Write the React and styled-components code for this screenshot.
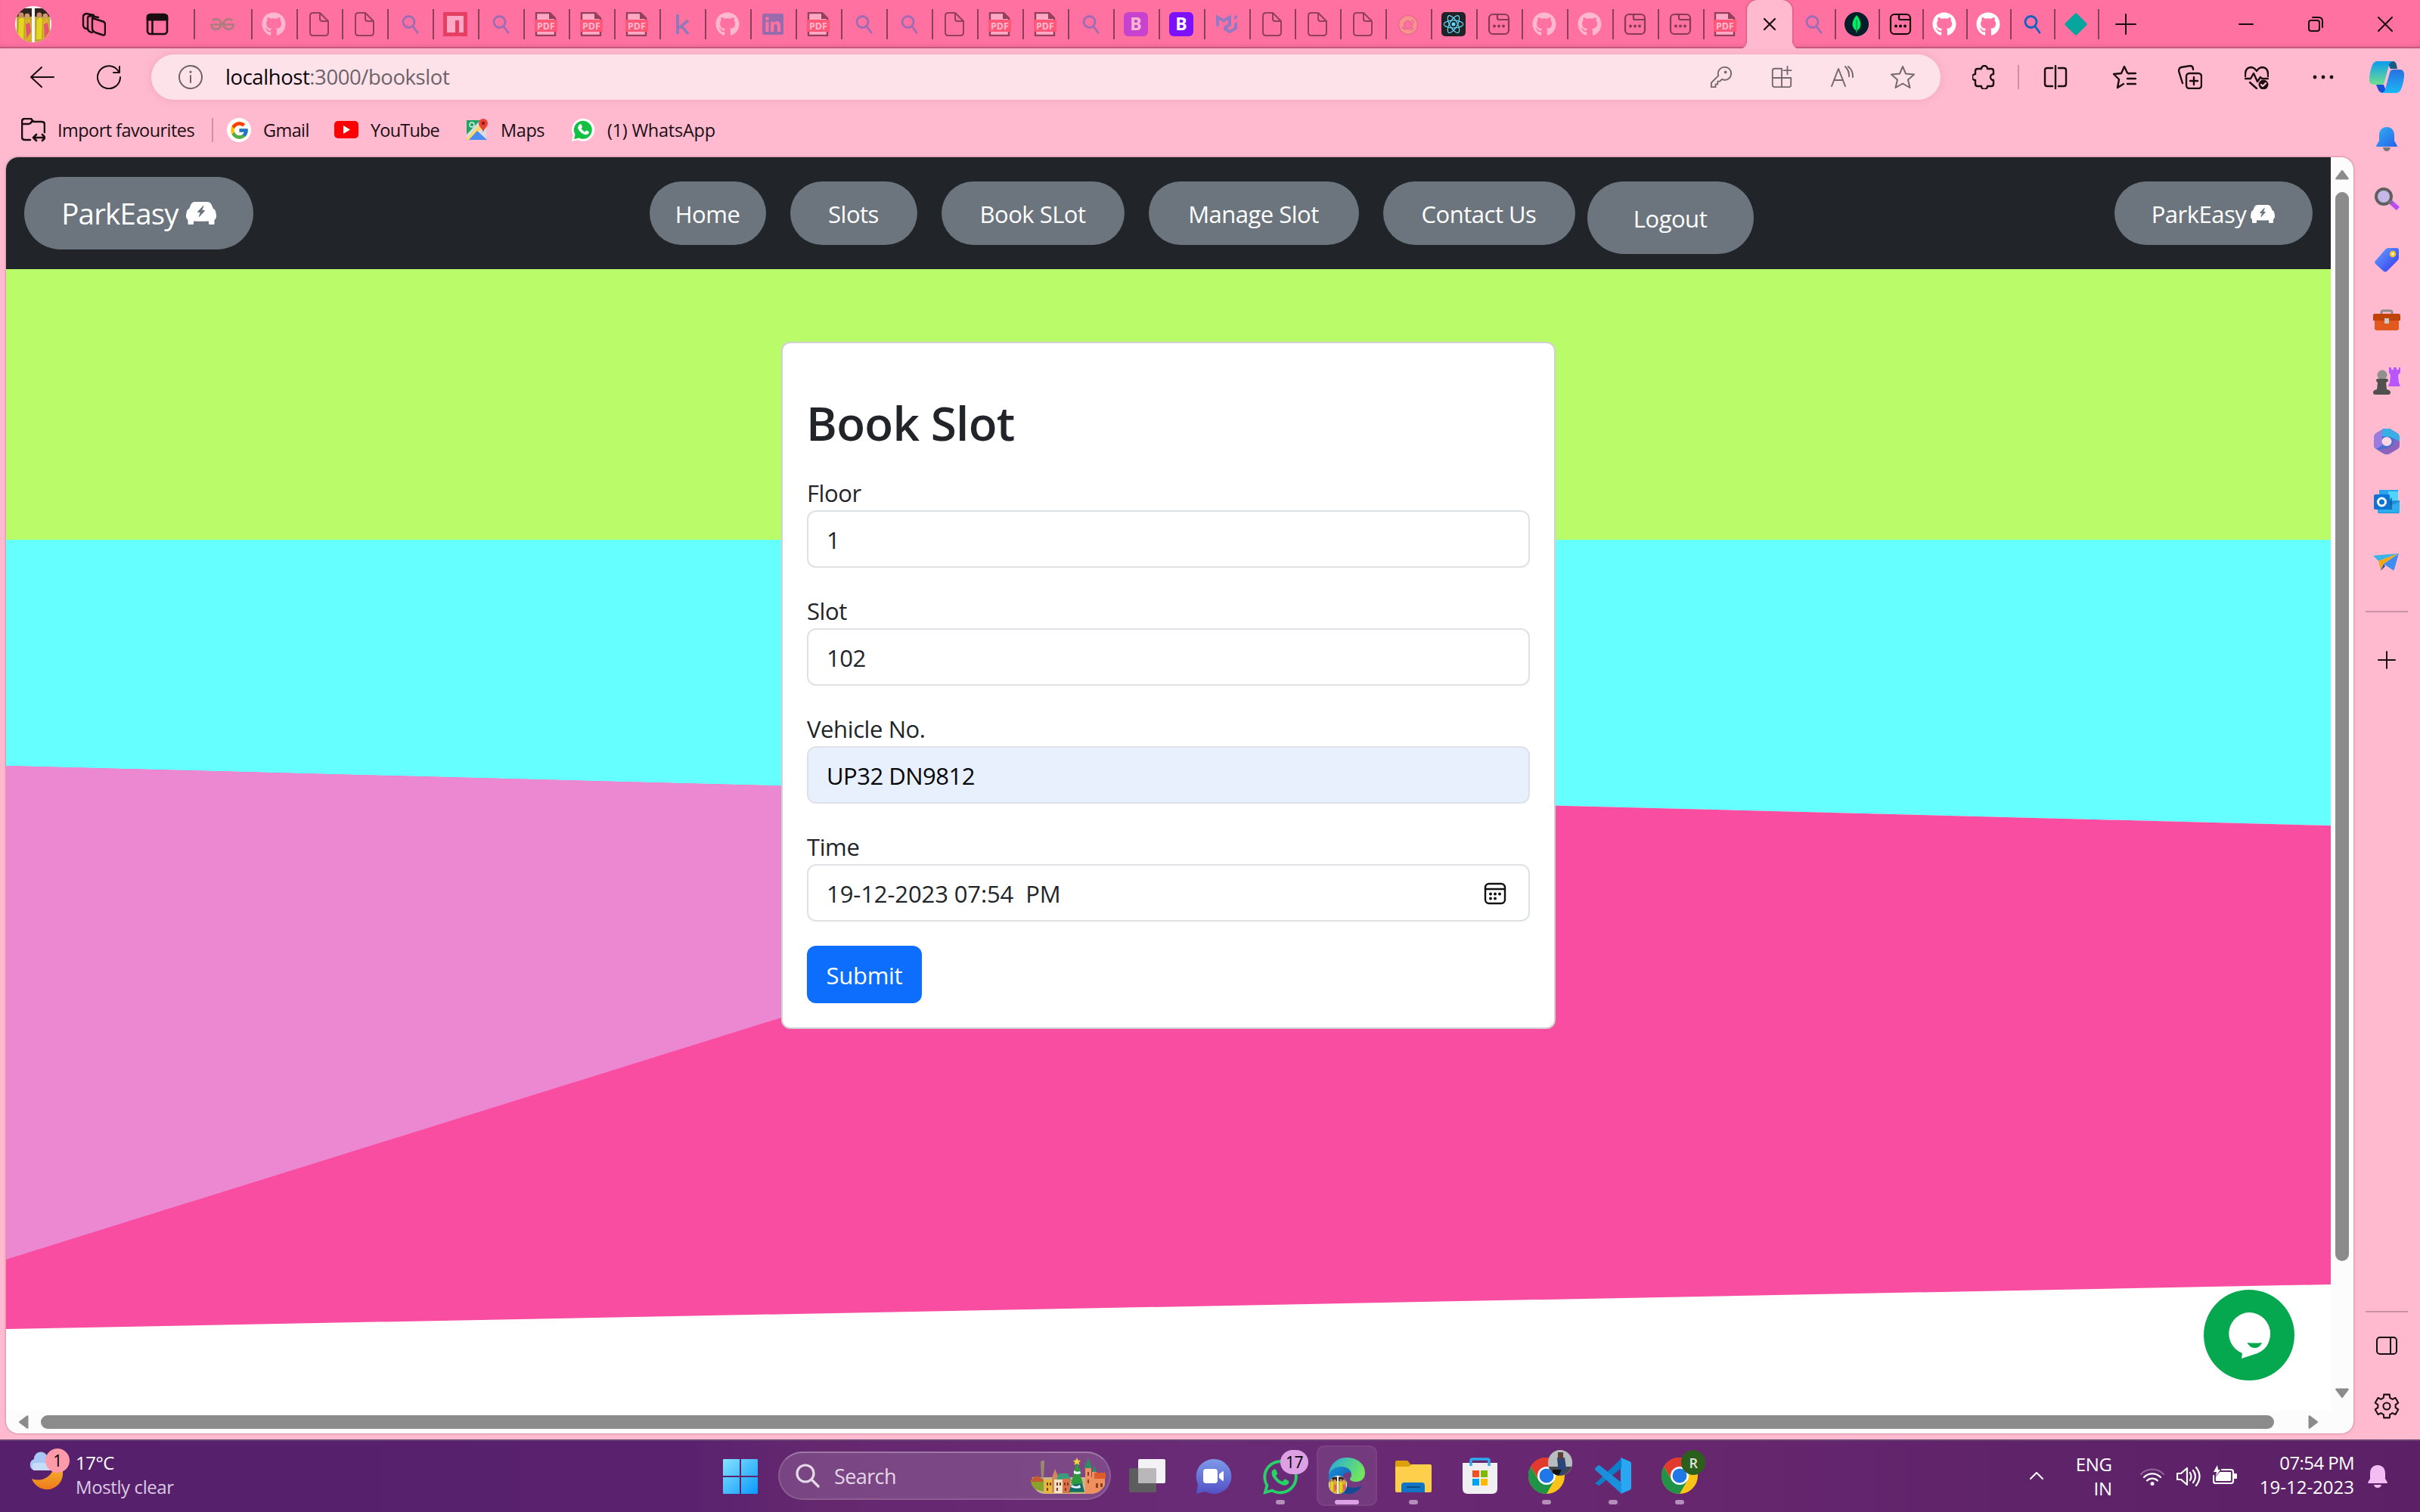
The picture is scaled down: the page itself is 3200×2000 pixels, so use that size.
import React from "react";
import styled, { createGlobalStyle } from "styled-components";
import { FaGithub, FaWhatsapp, FaLinkedin } from "react-icons/fa";
import { BsFillEvFrontFill } from "react-icons/bs";
import { SiGeeksforgeeks, SiMui, SiReact } from "react-icons/si";
import { FcGoogle } from "react-icons/fc";

const Global = createGlobalStyle`
  *, *::before, *::after { box-sizing: border-box; }
  body { margin: 0; overflow: hidden; font-family: "Open Sans", "Noto Sans", sans-serif; }
  svg { display: block; flex: none; }
`;

/* ---------- window frame ---------- */
const Screen = styled.div`
  width: 3200px;
  height: 2000px;
  display: flex;
  flex-direction: column;
  background: #ffbad0;
  overflow: hidden;
`;
const TitleBar = styled.div`
  height: 64px;
  flex: none;
  display: flex;
  align-items: center;
  background: #ff71a0;
  box-shadow: inset 0 -2px 0 #c9587f, inset 0 -6px 5px -3px #e06490;
`;
const Slot = styled.div`
  width: ${(p) => p.$w}px;
  height: ${(p) => p.$h || 60}px;
  flex: none;
  display: flex;
  align-items: center;
  justify-content: center;
`;
const TabSlot = styled.div`
  width: ${(p) => p.$w || 60}px;
  height: 40px;
  flex: none;
  display: flex;
  align-items: center;
  justify-content: center;
  border-left: 2px solid ${(p) => (p.$first ? "transparent" : "#8c3f5a")};
  padding-right: 2px;
  svg { opacity: ${(p) => (p.$awake ? 1 : 0.5)}; }
`;
const ActiveTab = styled.div`
  position: relative;
  width: 60px;
  height: 64px;
  flex: none;
  display: flex;
  align-items: center;
  justify-content: center;
  background: #ffbad0;
  border-radius: 14px 14px 0 0;
  box-shadow: 0 0 3px #a03c62;
  clip-path: inset(0 -10px 0 -10px);
  &::before, &::after {
    content: "";
    position: absolute;
    bottom: 0;
    width: 7px;
    height: 10px;
  }
  &::before { left: -7px; background: radial-gradient(ellipse at 0 0, transparent 68%, #ffbad0 72%); }
  &::after { right: -7px; background: radial-gradient(ellipse at 100% 0, transparent 68%, #ffbad0 72%); }
`;
const WindowControls = styled.div`
  display: flex;
  margin-left: auto;
`;
const Workspace = styled.div`
  height: 1840px;
  flex: none;
  display: flex;
`;
const MainColumn = styled.div`
  width: 3112px;
  display: flex;
  flex-direction: column;
`;

/* ---------- toolbar ---------- */
const Toolbar = styled.div`
  height: 76px;
  flex: none;
  display: flex;
  align-items: center;
  padding-left: 12px;
`;
const AddressBar = styled.div`
  width: 2366px;
  height: 60px;
  flex: none;
  margin: 0 14px 0 12px;
  padding: 0 10px 0 36px;
  display: flex;
  align-items: center;
  border-radius: 30px;
  background: #fee2ea;
  box-shadow: 0 0 12px rgba(160, 60, 100, 0.16);
`;
const Url = styled.span`
  margin: 0 auto 0 30px;
  font-size: 27.5px;
  line-height: 40px;
  letter-spacing: -0.43px;
  color: #6c6268;
  b { font-weight: 400; color: #0a0508; }
`;
const VLine = styled.div`
  width: 2px;
  height: ${(p) => p.$h || 32}px;
  flex: none;
  background: #cb93a5;
`;
const Bookmarks = styled.div`
  height: 68px;
  flex: none;
  display: flex;
  align-items: center;
  padding: 0 0 4px 28px;
`;
const Bookmark = styled.div`
  display: flex;
  align-items: center;
  gap: ${(p) => p.$gap || 16}px;
  width: ${(p) => p.$w}px;
  padding-left: ${(p) => p.$pl || 0}px;
  flex: none;
  font-size: 23.5px;
  line-height: 32px;
  letter-spacing: ${(p) => p.$ls || 0}px;
  color: #1b0e13;
  white-space: nowrap;
`;
const WhiteDisc = styled.span`
  width: 32px;
  height: 32px;
  border-radius: 50%;
  background: #fff;
  display: grid;
  place-items: center;
`;

/* ---------- viewport and scrollbars ---------- */
const Viewport = styled.div`
  width: 3104px;
  height: 1688px;
  margin-left: 8px;
  display: grid;
  grid-template-columns: 3074px 30px;
  grid-template-rows: 1658px 30px;
  border-radius: 16px;
  overflow: hidden;
  background: #fcfcfc;
  box-shadow: 0 0 3px rgba(90, 30, 50, 0.5);
`;
const VScroll = styled.div`
  display: flex;
  flex-direction: column;
  align-items: center;
  padding: 16px 0;
`;
const HScroll = styled.div`
  display: flex;
  align-items: center;
  padding: 0 16px;
`;
const VThumb = styled.div`
  width: 18px;
  height: 1414px;
  margin: 16px 0 auto;
  border-radius: 9px;
  background: #8b8b8b;
`;
const HThumb = styled.div`
  width: 2953px;
  height: 18px;
  margin: 0 auto 0 16px;
  border-radius: 9px;
  background: #8b8b8b;
`;

/* ---------- ParkEasy page ---------- */
const Page = styled.div`
  position: relative;
  z-index: 0;
  display: flex;
  flex-direction: column;
  overflow: hidden;
  background: #fff;
`;
const Backdrop = styled.svg`
  position: absolute;
  inset: 0;
  z-index: -1;
`;
const Nav = styled.nav`
  height: 148px;
  flex: none;
  display: flex;
  align-items: flex-start;
  padding: 32px 24px 0;
  background: #212529;
`;
const Brand = styled.a`
  width: 303px;
  height: 96px;
  margin-top: -6px;
  display: flex;
  align-items: center;
  justify-content: center;
  gap: 10px;
  border-radius: 48px;
  background: #6c757d;
  color: #fff;
  font-size: 38.5px;
  letter-spacing: -0.8px;
`;
const Links = styled.div`
  display: flex;
  align-items: flex-start;
  gap: 32px;
  margin-left: 524px;
`;
const NavButton = styled.a`
  width: ${(p) => p.$w}px;
  height: ${(p) => (p.$tall ? 96 : 84)}px;
  margin-left: ${(p) => (p.$tall ? -16 : 0)}px;
  display: flex;
  align-items: center;
  justify-content: center;
  gap: 6px;
  padding: 2px 1px 0 0;
  border-radius: 48px;
  background: #6c757d;
  color: #fff;
  font-size: 31px;
  letter-spacing: ${(p) => p.$ls ?? -0.5}px;
  white-space: nowrap;
`;
const Account = styled.div`
  margin-left: auto;
`;
const Card = styled.form`
  width: 1024px;
  height: 909px;
  margin: 96px 0 0 1025px;
  padding: 58px 32px 0;
  display: flex;
  flex-direction: column;
  align-items: flex-start;
  border: 2px solid #cfd1d3;
  border-radius: 12px;
  background: #fff;
  color: #212529;
`;
const Title = styled.h2`
  margin: 0 0 33px -1px;
  font-size: 62px;
  line-height: 94px;
  font-weight: 600;
  letter-spacing: -0.7px;
`;
const Field = styled.label`
  width: 956px;
  height: 156px;
  flex: none;
  display: flex;
  flex-direction: column;
  font-size: 31px;
  line-height: 48px;
  letter-spacing: -0.4px;
`;
const LabelText = styled.span`
  height: 48px;
  margin-top: -12px;
  line-height: 50px;
`;
const Control = styled.div`
  height: 76px;
  display: flex;
  align-items: center;
  justify-content: space-between;
  padding: 2px 29px 0 24px;
  border: 2px solid #dee2e6;
  border-radius: 12px;
  background: ${(p) => (p.$filled ? "#e8f0fe" : "#fff")};
  color: ${(p) => (p.$filled ? "#050608" : "#212529")};
  letter-spacing: ${(p) => p.$ls ?? -0.5}px;
  white-space: pre;
`;
const Submit = styled.button`
  width: 152px;
  height: 76px;
  margin-top: -12px;
  padding: 2px 0 0;
  border: 0;
  border-radius: 12px;
  background: #0d6efd;
  color: #fff;
  font: 400 31px/48px "Open Sans", sans-serif;
  letter-spacing: -0.3px;
`;
const ChatBubble = styled.div`
  position: absolute;
  right: 48px;
  bottom: 40px;
  width: 120px;
  height: 120px;
  border-radius: 50%;
  background: #05a84f;
`;

/* ---------- sidebar ---------- */
const Sidebar = styled.div`
  width: 88px;
  display: flex;
  flex-direction: column;
  align-items: center;
`;
const HLine = styled.div`
  width: 56px;
  height: 2px;
  flex: none;
  background: #cb93a5;
  margin-top: ${(p) => p.$mt || 0}px;
`;

/* ---------- taskbar ---------- */
const Taskbar = styled.div`
  height: 96px;
  flex: none;
  display: flex;
  align-items: flex-start;
  border-top: 2px solid #6a4273;
  background: linear-gradient(90deg, #56206d 0, #59216e 28%, #65286f 34%, #6a2b76 50%, #67276f 68%, #5f236a 84%, #5b2065 100%);
`;
const Weather = styled.div`
  width: 935px;
  display: flex;
  gap: 8px;
  padding: 10px 0 0 36px;
`;
const TwoLines = styled.div`
  display: flex;
  flex-direction: column;
  padding-top: ${(p) => p.$pt || 0}px;
  text-align: ${(p) => p.$align || "left"};
  color: #fff;
  font-size: 24px;
  line-height: 32px;
  letter-spacing: -0.3px;
  white-space: nowrap;
`;
const Line = styled.span`
  letter-spacing: ${(p) => p.$ls}px;
  color: ${(p) => (p.$dim ? "#dccbe2" : "#fff")};
`;
const TaskItem = styled.div`
  width: 88px;
  height: 94px;
  flex: none;
  position: relative;
  display: flex;
  justify-content: center;
  align-items: flex-start;
  padding-top: ${(p) => p.$top || 22}px;
  &::before {
    content: "";
    display: ${(p) => (p.$active ? "block" : "none")};
    position: absolute;
    left: 4px;
    top: 6px;
    width: 80px;
    height: 80px;
    border-radius: 10px;
    background: rgba(255, 255, 255, 0.08);
    border: 2px solid rgba(255, 255, 255, 0.05);
  }
  &::after {
    content: "";
    display: ${(p) => (p.$active || p.$open ? "block" : "none")};
    position: absolute;
    left: ${(p) => (p.$active ? 28 : 38)}px;
    top: 78px;
    width: ${(p) => (p.$active ? 32 : 12)}px;
    height: 6px;
    border-radius: 3px;
    background: ${(p) => (p.$active ? "#dda0e4" : "#b48fba")};
  }
  svg { position: relative; }
`;
const Badge = styled.span`
  position: absolute;
  left: ${(p) => p.$x}px;
  top: ${(p) => p.$y}px;
  width: ${(p) => p.$w || 32}px;
  height: ${(p) => p.$h || 32}px;
  border-radius: 18px;
  display: flex;
  align-items: center;
  justify-content: center;
  background: ${(p) => p.$bg};
  color: ${(p) => p.$fg || "#000"};
  font-size: ${(p) => p.$size || 21}px;
  font-weight: ${(p) => p.$weight || 400};
  letter-spacing: -0.5px;
  overflow: hidden;
`;
const WeatherIcon = styled.div`
  position: relative;
  width: 56px;
  height: 60px;
`;
const SearchBox = styled.div`
  width: 440px;
  height: 64px;
  margin: 14px 4px 0 6px;
  flex: none;
  display: flex;
  align-items: center;
  padding: 0 4px 0 21px;
  border: 2px solid rgba(255, 255, 255, 0.13);
  border-top-color: rgba(255, 255, 255, 0.28);
  border-radius: 32px;
  background: rgba(255, 255, 255, 0.14);
  color: #e6d6ea;
  font-size: 27px;
  letter-spacing: -0.6px;
  span { margin: 1px auto 0 19px; }
`;
const Tray = styled.div`
  margin-left: auto;
  height: 94px;
  padding: 8px 32px 0 0;
  display: flex;
  align-items: flex-start;
`;
const TrayIcon = styled.div`
  width: 48px;
  height: ${(p) => p.$h || 78}px;
  display: grid;
  place-items: center;
`;

/* ---------- drawings ---------- */
const Ico = ({ s = 32, h, vb = "0 0 32 32", w = 2, c = "#1a0d12", children }) => (
  <svg width={s} height={h || s} viewBox={vb} fill="none" stroke={c} strokeWidth={w} strokeLinecap="round" strokeLinejoin="round">
    {children}
  </svg>
);
const FileIcon = () => (
  <Ico c="#2a1018">
    <path d="M8 1h9l11 11v15q0 4-4 4H8q-4 0-4-4V5q0-4 4-4zM17 1v8q0 3 3 3h8" />
  </Ico>
);
const LensIcon = ({ c = "#3d69c8" }) => (
  <Ico s={32} w={2.8} c={c}>
    <circle cx="14.5" cy="13" r="7.5" />
    <path d="M20 19l6 8" />
  </Ico>
);
const PdfIcon = () => (
  <svg width="32" height="32" viewBox="0 0 32 32">
    <path d="M3 1h18l7 7v23H3z" fill="#ffe0ea" stroke="#2a1018" strokeWidth="2.4" />
    <path d="M20 1v8h8z" fill="#2a1018" />
    <path d="M1 10h30v16H1z" fill="#ff3f52" />
    <text x="16" y="23" textAnchor="middle" fontFamily="Open Sans" fontWeight="700" fontSize="12.5" fill="#fff">PDF</text>
  </svg>
);
const NpmIcon = () => (
  <svg width="32" height="32" viewBox="0 0 32 32">
    <path d="M0 0h32v32H0z" fill="#cc1027" />
    <path d="M5 5h22v22h-6V11h-5v16H5z" fill="#ffe0ea" />
  </svg>
);
const KaggleIcon = () => (
  <svg width="32" height="32" viewBox="0 0 32 32" fill="none" stroke="#2f80cf" strokeWidth="4">
    <path d="M10 3v26M24 11L12 21M15 18l9 11" />
  </svg>
);
const BootIcon = ({ faded }) => (
  <svg width="32" height="32" viewBox="0 0 32 32" overflow="visible">
    <rect width="32" height="32" rx="6" fill={faded ? "#9016ff" : "#7c10fb"} />
    <text x="16" y="24" textAnchor="middle" fontFamily="Open Sans" fontWeight="700" fontSize="23" fill="#fff">B</text>
  </svg>
);
const WindowIcon = () => (
  <Ico c="#12060a" w={2.2}>
    <rect x="3" y="3" width="26" height="26" rx="5" />
    <path d="M14 3v5q0 2 2 2h13" />
    <g fill="#12060a" stroke="none"><circle cx="10" cy="18.5" r="2" /><circle cx="16" cy="18.5" r="2" /><circle cx="22" cy="18.5" r="2" /></g>
  </Ico>
);
const DonutIcon = () => (
  <Ico c="#f5b87a" w={6}>
    <circle cx="16" cy="17" r="9.5" />
    <g stroke="#d9668a" strokeWidth="1.600"><circle cx="16" cy="17" r="12.500" /><circle cx="16" cy="17" r="5" /><path d="M8 20l4 3M20 24l3-3M21 10l3 4" /></g>
  </Ico>
);
const ReactTile = () => (
  <svg width="32" height="32" viewBox="0 0 32 32">
    <rect width="32" height="32" rx="5" fill="#202225" />
    <g transform="translate(2.5 2.5)"><SiReact size={27} color="#61dafb" /></g>
  </svg>
);
const MongoIcon = () => (
  <svg width="32" height="32" viewBox="0 0 32 32">
    <circle cx="16" cy="16" r="16" fill="#021e2b" />
    <path d="M16 4c5 6 7 12 4 17-1 2-3 3-4 4-1-1-3-2-4-4-3-5-1-11 4-17z" fill="#00ed64" />
    <path d="M16 10v17" stroke="#0a9f50" strokeWidth="1.6" />
  </svg>
);
const Diamond = () => (
  <svg width="32" height="32" viewBox="0 0 32 32">
    <path d="M16 1.500q1 0 2 1l12 12q1.500 1.500 0 3l-12 12q-2 2-4 0l-12-12q-1.500-1.500 0-3l12-12q1-1 2-1z" fill="#06a69e" />
  </svg>
);
const Figures = ({ s = 48 }) => (
  <svg width={s} height={s} viewBox="0 0 48 48">
    <defs><clipPath id={`disc${s}`}><circle cx="24" cy="24" r="24" /></clipPath></defs>
    <g clipPath={`url(#disc${s})`}>
      <path d="M0 0h48v48H0z" fill="#f8f4f1" />
      {[2, 26].map((x) => (
        <g key={x} transform={`translate(${x} 0)`}>
          <path d="M0 3h20v30H0z" fill="#30221e" />
          <path d="M0 14h20v34H0z" fill="#b9a92e" />
          <path d="M3 18q3-5 7-1l-1 27H2z" fill="#e6d420" />
          <path d="M11 18q4-5 7 0l2 28h-9z" fill="#dcae2c" />
          <path d="M12 24l5-2 2 12-6 9z" fill="#e5556f" />
          <circle cx="6" cy="12" r="3.500" fill="#c98d69" />
          <circle cx="14" cy="13" r="3.300" fill="#d39a72" />
        </g>
      ))}
    </g>
  </svg>
);
const MapsIcon = () => (
  <svg width="32" height="32" viewBox="0 0 32 32">
    <path d="M1 3h26v26H1z" fill="#d9dde2" />
    <path d="M1 3h18L1 22z" fill="#1fa463" />
    <path d="M1 27L20 7l4 4L5 29H1z" fill="#fdd663" />
    <path d="M15 17l13 12H4z" fill="#4a8bf5" />
    <circle cx="8" cy="9" r="3" fill="none" stroke="#d7f0e2" strokeWidth="1.500" />
    <path d="M23 19c-1-5-6-7-6-12a6 6 0 0 1 12 0c0 5-5 7-6 12z" fill="#ea4335" />
    <circle cx="23" cy="7" r="2.200" fill="#8a1d16" />
  </svg>
);
const WaIcon = () => (
  <svg width="32" height="32" viewBox="0 0 32 32">
    <path d="M1 31l2-8a15 15 0 1 1 6 6z" fill="#fff" />
    <path d="M4 28l1.500-6a12 12 0 1 1 5 4.600z" fill="#12c143" />
    <path d="M11 9q2-2 3 .5l1 2.500-1.500 2q2 3 5 4.500l2-2 3 1.500q1 1-.5 3-2.500 2-6 .5-5-2-7.500-7-1-3 1.500-5.500z" fill="#fff" />
  </svg>
);

const PetalGrad = ({ id, a, b, x2 = 1, y2 = 1 }) => (
  <linearGradient id={id} x1="0" y1="0" x2={x2} y2={y2}><stop offset="0" stopColor={a} /><stop offset="1" stopColor={b} /></linearGradient>
);
const Copilot = () => (
  <svg width="48" height="48" viewBox="0 0 48 48">
    <defs>
      <PetalGrad id="cp1" a="#0a9bf0" b="#6fe08e" x2={0} />
      <PetalGrad id="cp2" a="#2a6fe0" b="#19b8f5" x2={0} />
    </defs>
    <path d="M24 1h8q4 0 5 5l1 5h-9z" fill="#175a86" />
    <path d="M10 32h10l4 11h-4q-6 0-8-6z" fill="#1a4fd8" />
    <path d="M12 1h20q-4 1-5 5l-6 22q-1 4-5 4H7q-7 0-6-9 1-10 4-17 2-5 7-5z" fill="url(#cp1)" />
    <path d="M36 43H17q4-1 5-5l6-22q1-4 5-4h8q7 0 6 9-1 10-4 17-2 5-7 5z" fill="url(#cp2)" />
  </svg>
);
const BlueBell = () => (
  <svg width="32" height="34" viewBox="0 0 32 34">
    <defs><PetalGrad id="bell" a="#33b1f2" b="#2463e8" /></defs>
    <path d="M11 28h10q-1 5-5 5t-5-5z" fill="#777" />
    <path d="M16 1c7 0 10 5 10 11v7l4 7q0 1-1 1H3q-1 0-1-1l4-7v-7C6 6 9 1 16 1z" fill="url(#bell)" />
  </svg>
);
const SideSearch = () => (
  <svg width="34" height="34" viewBox="0 0 34 34">
    <path d="M22 20l10 9" stroke="#b94cf5" strokeWidth="6" />
    <circle cx="13" cy="13" r="10" fill="#c5b7e6" stroke="#606060" strokeWidth="4" />
    <path d="M20 19l4 3" stroke="#777" strokeWidth="3" />
  </svg>
);
const Tag = () => (
  <svg width="34" height="34" viewBox="0 0 34 34">
    <defs><PetalGrad id="tag" a="#63a6ff" b="#3434ef" /></defs>
    <path d="M19 1h11q3 0 3 3v10q0 2-2 4L18 31q-3 3-6 0L2 22q-2-3 1-5L15 3q2-2 4-2z" fill="url(#tag)" />
    <circle cx="25" cy="9" r="3" fill="#e9f0ff" stroke="#fbc719" strokeWidth="2.400" />
  </svg>
);
const Toolbox = () => (
  <svg width="36" height="30" viewBox="0 0 36 30">
    <path d="M11 8V4q0-2 2-2h10q2 0 2 2v4" fill="none" stroke="#8b8b8b" strokeWidth="3" />
    <path d="M2 14h32v11q0 3-3 3H5q-3 0-3-3z" fill="#e1591f" />
    <path d="M0 8q0-2 2-2h32q2 0 2 2v7H0z" fill="#bf4309" />
    <path d="M15 12h6v7h-6z" fill="#c9c9c9" />
  </svg>
);
const Chess = () => (
  <svg width="36" height="36" viewBox="0 0 36 36">
    <path d="M21 0h3v3h3V0h4v3h3V0h2v7q-3 2-3 4l1 9 2 5H20l2-5 1-9q0-2-2-4z" fill="#b755ff" />
    <circle cx="12" cy="10" r="6.500" fill="#909090" />
    <path d="M4 17q0-2 2-2h12q2 0 2 2t-3 3l1 9q5 1 5 4 0 3-3 3H3q-3 0-3-3t5-4l1-9q-2-1-2-3z" fill="#505050" />
  </svg>
);
const M365 = () => (
  <svg width="34" height="36" viewBox="0 0 34 36">
    <path d="M13 1h8l10 6q3 2 3 5v11q0 3-3 5l-10 6q-4 2-8 0L3 28q-3-2-3-5V12q0-3 3-5z" fill="#4b6fd0" />
    <path d="M13 1q-2 1-2 5v17l-8 5q-3-2-3-5V12q0-3 3-5z" fill="#9a7be0" />
    <path d="M12 1h9l10 6q3 2 3 5v6l-12-6-11-1V6q0-4 1-5z" fill="#38aee6" />
    <path d="M34 18v5q0 3-3 5l-10 6q-4 2-8 0l-8-5 13-2 8-5q2-4 0-7z" fill="#8d64bd" />
    <ellipse cx="17" cy="18" rx="6.500" ry="6" fill="#ffd6e4" />
  </svg>
);
const Outlook = () => (
  <svg width="34" height="32" viewBox="0 0 34 32">
    <path d="M7 0h25v20H7z" fill="#2aa4ea" />
    <path d="M19 2h13v12H19z" fill="#4fd5fb" />
    <path d="M5 16l29-2v15q0 2-2 2H7q-2 0-2-2z" fill="#1c8fdd" />
    <path d="M34 16v14H8q-3 0-3-3z" fill="#31b5f2" opacity=".8" />
    <path d="M24 10v16H5v-3z" fill="#0a4d8a" opacity=".6" />
    <rect y="6" width="21" height="20" rx="2" fill="#0b74d4" />
    <ellipse cx="10.500" cy="16" rx="5" ry="5" fill="none" stroke="#fff" strokeWidth="3" />
  </svg>
);
const Plane = () => (
  <svg width="36" height="26" viewBox="0 0 36 26">
    <path d="M0 4L34 1 7 11z" fill="#38b4ea" />
    <path d="M34 1L7 11l3 12 4-8z" fill="#f3a712" />
    <path d="M34 1L14 15l12 8q1 1 2-1z" fill="#3d8df2" />
    <path d="M14 15l-4 9 6-6z" fill="#1551a8" />
  </svg>
);
const Gear = () => {
  const pts = [];
  for (let i = 0; i < 6; i++) {
    [[-0.36, 12.5], [-0.24, 16.8], [0.24, 16.8], [0.36, 12.5]].forEach(([o, r]) => {
      const a = (i * Math.PI) / 3 + o - Math.PI / 2;
      pts.push(`${(18 + r * Math.cos(a)).toFixed(2)},${(18 + r * Math.sin(a)).toFixed(2)}`);
    });
  }
  return (
    <Ico s={34} vb="0 0 36 36" w={2.2}>
      <polygon points={pts.join(" ")} />
      <circle cx="18" cy="18" r="4.800" />
    </Ico>
  );
};
const WinLogo = () => (
  <svg width="46" height="46" viewBox="0 0 46 46">
    <defs>
      <linearGradient id="win" gradientUnits="userSpaceOnUse" x1="0" y1="0" x2="46" y2="46"><stop stopColor="#86e2fd" /><stop offset="1" stopColor="#0a99fb" /></linearGradient>
    </defs>
    <path d="M1 0h21v22H0V1q0-1 1-1zM24 0h21q1 0 1 1v21H24zM0 24h22v22H1q-1 0-1-1zM24 24h22v21q0 1-1 1H24z" fill="url(#win)" />
  </svg>
);
const City = () => (
  <svg width="100" height="48" viewBox="0 0 100 48">
    <path d="M2 26h96v10q-6 12-20 12H20Q6 48 2 34z" fill="#c9b58e" />
    <path d="M14 4h4v3l-1 20h-3L13 7z" fill="#9b8a70" />
    <path d="M0 30l8-6 9 6v15L6 42Q0 37 0 30z" fill="#8aa12b" />
    <path d="M0 29l8-5 9 5-1 3H1z" fill="#c85a31" />
    <path d="M18 29h12v18H18z" fill="#e9b838" />
    <path d="M28 27l4-12 5 12v19h-9z" fill="#d08a5a" />
    <path d="M34 30l3-9h12l5 10z" fill="#3c9b7c" />
    <path d="M31 29h11v18H31z" fill="#f3e2c4" />
    <path d="M42 28h10v19H42z" fill="#e07048" />
    <path d="M21 33h2v4h-2zM25 33h2v4h-2zM34 33h2v4h-2zM38 33h2v4h-2zM44 33h2v4h-2zM48 33h2v4h-2zM21 40h2v4h-2zM34 40h2v4h-2zM45 40h2v4h-2z" fill="#7c3a26" />
    <path d="M72 14h8v34h-8zM81 19h6v18h-6zM80 27h18v9q-6 11-18 12z" fill="#f0905f" />
    <path d="M71 14l3-9 2-4 2 4 3 9zM81 19l3-9 3 9z" fill="#2e8e63" />
    <path d="M84 20h15v8H84z" fill="#dc5c2c" />
    <path d="M75 19h2v5h-2zM75 29h2v5h-2zM86 34h3v6h-3zM92 34h3v5h-3z" fill="#8a3f22" />
    <path d="M61 6l6 15-2 1 4 12-3 1 5 11H50l6-11-3-1 4-12-1-1z" fill="#2f9a3d" />
    <path d="M53 36l15-2 3 11H51z" fill="#136b6a" />
    <path d="M57 17q4 3 8 1l1 3q-5 2-9 0zM54 36q6 4 11 0l1 4q-7 2-13-1z" fill="#e6f3f5" />
    <path d="M61 0l1.500 3.500 3.500.5-2.500 2.500 1 3.500-3.500-2-3.500 2 1-3.500L56 4l3.500-.5z" fill="#f6cf3d" />
  </svg>
);
const TaskView = () => (
  <svg width="48" height="46" viewBox="0 0 48 46">
    <rect x="12" width="36" height="32" rx="2" fill="#f3f2f4" />
    <rect y="12" width="36" height="32" rx="2" fill="#5d5d60" />
    <path d="M12 12h24v20H12z" fill="#b9b7ba" />
  </svg>
);
const MeetIcon = () => (
  <svg width="48" height="48" viewBox="0 0 48 48">
    <defs><PetalGrad id="meet" a="#7d9ae8" b="#5350c5" x2={0} /></defs>
    <path d="M23 1a23 23 0 1 1-10 43L1 47l2-13A23 23 0 0 1 23 1z" fill="url(#meet)" />
    <rect x="10" y="14" width="19" height="19" rx="4" fill="#fff" />
    <path d="M31 21l5-4q1 0 1 1v11q0 1-1 1l-5-4z" fill="#fff" />
  </svg>
);
const EdgeIcon = () => (
  <svg width="48" height="48" viewBox="0 0 48 48">
    <defs>
      <PetalGrad id="edgeTop" a="#23a7e4" b="#6fe65e" y2={0.4} />
      <PetalGrad id="edgeLow" a="#1a8fdc" b="#0c4f9c" />
    </defs>
    <path d="M0 23C1 9 11 0 24 0c14 0 24 9 24 20 0 8-5 12-12 12-5 0-8-2-8-4 0-1 2-2 2-5 0-5-5-9-13-9C8 14 2 18 0 23z" fill="url(#edgeTop)" />
    <path d="M0 24c1-7 8-12 16-12 7 0 13 3 14 9-3-3-12-2-12 8 0 9 9 14 16 18-3 1-6 1-10 1C9 48 0 37 0 24z" fill="url(#edgeLow)" />
    <path d="M19 25c-2 8 4 15 13 15 5 0 8-1 12-3-3 6-10 11-19 11-9-3-13-15-6-23z" fill="#134a94" />
  </svg>
);
const FolderIcon = () => (
  <svg width="48" height="44" viewBox="0 0 48 44">
    <path d="M0 2q0-2 2-2h13q2 0 3 2l2 3v9H0z" fill="#dda008" />
    <path d="M0 8h18l3-3h25q2 0 2 2v33q0 2-2 2H2q-2 0-2-2z" fill="#fdcf4a" />
    <path d="M8 42V33q0-4 4-4h23q4 0 4 4v9z" fill="#1274c4" />
    <path d="M15 35h18" stroke="#0a4a85" strokeWidth="2" />
  </svg>
);
const StoreIcon = () => (
  <svg width="46" height="48" viewBox="0 0 46 48">
    <path d="M0 7h46v34q0 7-7 7H7q-7 0-7-7z" fill="#f0f0f2" />
    <path d="M11 11V4q0-2 2-2h20q2 0 2 2v7" fill="none" stroke="#2da9ee" strokeWidth="3.500" />
    <path d="M13 17h9v9h-9z" fill="#f25022" /><path d="M24 17h9v9h-9z" fill="#7fba00" />
    <path d="M13 28h9v9h-9z" fill="#00a4ef" /><path d="M24 28h9v9h-9z" fill="#ffb900" />
  </svg>
);
const ChromeIcon = () => (
  <svg width="48" height="48" viewBox="0 0 48 48">
    <circle cx="24" cy="24" r="24" fill="#fcc419" />
    <path d="M24 24L3.200 12A24 24 0 0 1 44.800 12z" fill="#e23b2e" />
    <path d="M24 12h20.800A24 24 0 0 0 3.200 12L14 30z" fill="#e23b2e" />
    <path d="M3.200 12A24 24 0 0 0 24 48l10.400-18L24 36l-10.400-6z" fill="#1f9447" />
    <circle cx="24" cy="24" r="12" fill="#fff" />
    <circle cx="24" cy="24" r="9.500" fill="#1f77e8" />
  </svg>
);
const CodeIcon = () => (
  <svg width="48" height="48" viewBox="0 0 48 48">
    <path d="M34 0l12 5q2 1 2 3v32q0 2-2 3l-12 5V0z" fill="#2aa7f2" />
    <path d="M35 1L5 30l-5 4 5 3q1 0 2-1l28-22z" fill="#0d7fc9" />
    <path d="M0 14l5-4q1 0 2 1l28 22v14L33 46 0 16z" fill="#1a8fdb" />
  </svg>
);
const Person = () => (
  <svg width="32" height="34" viewBox="0 0 32 34">
    <defs><clipPath id="person"><ellipse cx="16" cy="17" rx="16" ry="17" /></clipPath></defs>
    <g clipPath="url(#person)">
      <path d="M0 0h32v34H0z" fill="#b8bcc0" />
      <path d="M0 22h32v12H0z" fill="#45464b" />
      <path d="M12 10h10l2 14-4 8h-6z" fill="#2b4577" />
      <path d="M13 3h7v9h-7z" fill="#5b3f37" />
      <path d="M6 26h12l-4 8H6z" fill="#111" />
    </g>
  </svg>
);
const Arrow = ({ d }) => {
  const v = d === "up" || d === "down";
  const paths = { up: "M8 1.500q1-1 2 0l7.500 10q.8 2-1 2H1.500q-2 0-1-2z", down: "M8 12.500q1 1 2 0l7.500-10q.8-2-1-2H1.500q-2 0-1 2z", left: "M1.500 8q-1 1 0 2l10 7.500q2 .8 2-1V1.500q0-2-2-1z", right: "M12.500 8q1 1 0 2l-10 7.500q-2 .8-2-1V1.500q0-2 2-1z" };
  return <svg width={v ? 18 : 14} height={v ? 14 : 18} viewBox={v ? "0 0 18 14" : "0 0 14 18"}><path d={paths[d]} fill="#8b8b8b" /></svg>;
};

const ICONS = {
  gfg: () => <SiGeeksforgeeks size={32} color="#5a8b5e" />,
  gh: () => <FaGithub size={32} color="#fff" />,
  file: FileIcon, lens: LensIcon, npm: NpmIcon, pdf: PdfIcon,
  kaggle: KaggleIcon,
  linkedin: () => <FaLinkedin size={32} color="#3367b8" />,
  boot: () => <BootIcon faded />, mui: () => <SiMui size={28} color="#2f7fe8" />,
  win: WindowIcon, donut: DonutIcon,
  bootOn: BootIcon, react: ReactTile, mongo: MongoIcon, diamond: Diamond,
  lensOn: () => <LensIcon c="#0b63c4" />,
};
const SLEEPING = "gh file file lens npm lens pdf pdf pdf kaggle gh linkedin pdf lens lens file pdf pdf lens boot bootOn! mui file file file donut react! win gh gh win win".split(" ");
const RECENT = ["mongo", "win", "gh", "gh", "lensOn", "diamond"];

const TabItem = ({ name, ...rest }) => {
  const awake = name.endsWith("!") || rest.$awake;
  const Icon = ICONS[name.replace("!", "")];
  return <TabSlot {...rest} $awake={awake}><Icon /></TabSlot>;
};

export default function App() {
  return (
    <Screen>
      <Global />
      <TitleBar>
        <Slot $w={88}><Figures /></Slot>
        <Slot $w={72}>
          <Ico w={2.4}>
            <path d="M14 8l13 4q4 1 4 4v11q0 5-4 3l-9-3q-4-2-4-5zM8 23V8q0-3 4-3l10 2M2 18V6q0-3 4-4l10 2M14 27q-6-1-6-6M6 22q-4-1-4-5" />
          </Ico>
        </Slot>
        <Slot $w={96}>
          <Ico w={2.6}><rect x="3" y="3" width="26" height="26" rx="4" /><path d="M3 10h26M9.500 10v19" /><path d="M5 4h22q2 0 2 2v4H3V6q0-2 2-2z" fill="#1a0d12" /></Ico>
        </Slot>
        <TabItem name="gfg" $w={76} />
        {SLEEPING.map((n, i) => <TabItem key={i} name={n} />)}
        <TabItem name="pdf" $w={58} />
        <ActiveTab><Ico s={20} vb="0 0 20 20" w={2.200}><path d="M3 3l14 14M17 3L3 17" /></Ico></ActiveTab>
        <TabItem name="lens" $w={56} $first />
        {RECENT.map((n, i) => <TabItem key={i} name={n} $w={58} $awake />)}
        <TabSlot $w={74} $awake><Ico s={28} vb="0 0 28 28"><path d="M14 1v26M1 14h26" /></Ico></TabSlot>
        <WindowControls>
          <Slot $w={92}><Ico s={20} vb="0 0 20 20"><path d="M1 10h18" /></Ico></Slot>
          <Slot $w={92}><Ico s={20} vb="0 0 20 20"><rect x="1" y="5" width="14" height="14" rx="3" /><path d="M6 1h8q5 0 5 5v8" /></Ico></Slot>
          <Slot $w={92}><Ico s={20} vb="0 0 20 20"><path d="M1 1l18 18M19 1L1 19" /></Ico></Slot>
        </WindowControls>
      </TitleBar>

      <Workspace>
        <MainColumn>
          <Toolbar>
            <Slot $w={88}><Ico><path d="M31 16H1M15 3L1 16l14 13" /></Ico></Slot>
            <Slot $w={88}><Ico><path d="M31 16A15 15 0 1 1 26 5l4 5M30 2v8h-8" /></Ico></Slot>
            <AddressBar>
              <Ico c="#6c6268"><circle cx="16" cy="16" r="15" /><path d="M16 14v9" /><path d="M16 9v.3" strokeWidth="3" /></Ico>
              <Url><b>localhost</b>:3000/bookslot</Url>
              <Slot $w={80}><Ico s={30} c="#75696f"><circle cx="22" cy="9" r="2" fill="#75696f" stroke="none" /><path d="M20 2a9 9 0 1 1-3 17l-3 3h-3v4H8v4H2v-6l10-10A9 9 0 0 1 20 2z" /></Ico></Slot>
              <Slot $w={80}><Ico s={30} c="#75696f"><path d="M16 4H6Q3 4 3 7v20q0 3 3 3h20q3 0 3-3V17H3M16 4v26M24 1v11M18.500 6.500h11" /></Ico></Slot>
              <Slot $w={80}><Ico s={32} c="#75696f"><path d="M2 28L11 5l9 23M5 20h12M20 2a17 17 0 0 1 5 13M24 2a17 17 0 0 1 6 14" /></Ico></Slot>
              <Slot $w={80}><Ico s={32} c="#75696f"><path d="M16 2l4 9.500 11 1-8 7 2.500 10.500L16 24.500 6.500 30 9 19.500l-8-7 11-1z" /></Ico></Slot>
            </AddressBar>
            <Slot $w={88}><Ico w={2.400}><path d="M7 5h5a4 4 0 0 1 8 0h5q3 0 3 3v4a4 4 0 0 0 0 8v5q0 3-3 3h-5a4 4 0 0 1-8 0H7q-3 0-3-3v-5a4 4 0 0 1 0-8V8q0-3 3-3z" /></Ico></Slot>
            <VLine />
            <Slot $w={96}><Ico w={2.400}><path d="M12 4H5Q2 4 2 7v18q0 3 3 3h7M20 4h7q3 0 3 3v18q0 3-3 3h-7M16 1v30" /></Ico></Slot>
            <Slot $w={86}><Ico w={2.400}><path d="M22 11.500l-2-1L16 2l-4 9-10 1 7 7-2 11 8-5M22 11h9M20 18h11M20 25h11" /></Ico></Slot>
            <Slot $w={88}><Ico w={2.400}><rect x="11" y="11" width="20" height="20" rx="4" /><path d="M21 16v10M16 21h10M6 24L1 8q0-4 3-5l12-2q4 0 4 5" /></Ico></Slot>
            <Slot $w={88}><Ico w={2.400}><path d="M1 15Q0 4 8 3q5 0 8 5 3-5 8-5 8 1 7 12M1 18h7l4-7 5 11 4-6 2 2h8M7 23l9 8" /><circle cx="25" cy="26" r="6.500" fill="#1a0d12" stroke="none" /><path d="M22 26l2 2 4-4" stroke="#ffbad0" /></Ico></Slot>
            <Slot $w={88}><Ico><g fill="#1a0d12" stroke="none"><circle cx="5" cy="16" r="2.400" /><circle cx="16" cy="16" r="2.400" /><circle cx="27" cy="16" r="2.400" /></g></Ico></Slot>
          </Toolbar>
          <Bookmarks>
            <Bookmark $w={252} $ls={-0.55}>
              <Ico w={2.600}><path d="M12 29H5q-4 0-4-4V5q0-4 4-4h7q2 0 3 3l2 1h10q4 0 4 4v10M2 8h7q3 0 4-2l2-2M17 26h14M20 22l-4 4 4 4M28 22l4 4-4 4" /></Ico>Import favourites
            </Bookmark>
            <VLine />
            <Bookmark $w={160} $pl={18} $ls={-0.6}><WhiteDisc><FcGoogle size={27} /></WhiteDisc>Gmail</Bookmark>
            <Bookmark $w={174} $ls={-0.8}>
              <svg width="32" height="24" viewBox="0 0 32 24"><rect width="32" height="23" rx="5" fill="#f00" /><path d="M12 6l9 5.500-9 5.500z" fill="#fff" /></svg>YouTube
            </Bookmark>
            <Bookmark $w={139} $gap={14} $ls={-0.4}><MapsIcon />Maps</Bookmark>
            <Bookmark $w={220} $ls={-0.25}><WaIcon />(1) WhatsApp</Bookmark>
          </Bookmarks>

          <Viewport>
            <Page>
              <Backdrop width="3074" height="1658" viewBox="0 0 3074 1658">
                <path d="M0 148h3074v358H0z" fill="#b9fb69" />
                <path d="M0 506h3074v378L0 805z" fill="#64fffe" />
                <path d="M0 805l3074 79v607L0 1550z" fill="#f94da1" />
                <path d="M0 805l1932 50L0 1458z" fill="#ec87d2" />
              </Backdrop>
              <Nav>
                <Brand>ParkEasy<BsFillEvFrontFill size={40} /></Brand>
                <Links>
                  <NavButton $w={154}>Home</NavButton>
                  <NavButton $w={168}>Slots</NavButton>
                  <NavButton $w={242}>Book SLot</NavButton>
                  <NavButton $w={278}>Manage Slot</NavButton>
                  <NavButton $w={254}>Contact Us</NavButton>
                  <NavButton $w={220} $tall>Logout</NavButton>
                </Links>
                <Account><NavButton $w={262}>ParkEasy<BsFillEvFrontFill size={32} /></NavButton></Account>
              </Nav>
              <Card>
                <Title>Book Slot</Title>
                <Field><LabelText>Floor</LabelText><Control>1</Control></Field>
                <Field><LabelText>Slot</LabelText><Control>102</Control></Field>
                <Field><LabelText>Vehicle No.</LabelText><Control $filled>UP32 DN9812</Control></Field>
                <Field>
                  <LabelText>Time</LabelText>
                  <Control $ls={-0.1}>
                    19-12-2023 07:54 {" "}PM
                    <Ico s={30} vb="0 0 30 30" c="#111" w={2.400}>
                      <rect x="2" y="2" width="26" height="26" rx="5" /><path d="M2 9h26" />
                      <g fill="#111" stroke="none"><circle cx="9" cy="15.500" r="2" /><circle cx="15" cy="15.500" r="2" /><circle cx="21" cy="15.500" r="2" /><circle cx="9" cy="21.500" r="2" /><circle cx="15" cy="21.500" r="2" /></g>
                    </Ico>
                  </Control>
                </Field>
                <Submit type="button">Submit</Submit>
              </Card>
              <ChatBubble>
                <svg width="120" height="120" viewBox="0 0 120 120">
                  <path d="M60 30a28 28 0 0 1 28 28c0 15-9 24-20 27L50 91l1-7A28 28 0 0 1 60 30z" fill="#fff" />
                  <path d="M57.500 70q10 1 19.500 0-3 7-9.500 7t-10-7z" fill="#05a84f" />
                </svg>
              </ChatBubble>
            </Page>
            <VScroll><Arrow d="up" /><VThumb /><Arrow d="down" /></VScroll>
            <HScroll><Arrow d="left" /><HThumb /><Arrow d="right" /></HScroll>
          </Viewport>
        </MainColumn>

        <Sidebar>
          <Slot $w={88} $h={80}><Copilot /></Slot>
          <Slot $w={88} $h={80}><BlueBell /></Slot>
          <Slot $w={88} $h={80}><SideSearch /></Slot>
          <Slot $w={88} $h={80}><Tag /></Slot>
          <Slot $w={88} $h={80}><Toolbox /></Slot>
          <Slot $w={88} $h={80}><Chess /></Slot>
          <Slot $w={88} $h={80}><M365 /></Slot>
          <Slot $w={88} $h={80}><Outlook /></Slot>
          <Slot $w={88} $h={80}><Plane /></Slot>
          <HLine $mt={24} />
          <Slot $w={88} $h={126}><Ico s={24} vb="0 0 24 24"><path d="M12 1v22M1 12h22" /></Ico></Slot>
          <HLine $mt={798} />
          <Slot $w={88} $h={88}><Ico s={30} h={26} vb="0 0 30 26"><rect x="2" y="2" width="26" height="22" rx="4" /><path d="M20 2v22" /></Ico></Slot>
          <Slot $w={88} $h={72}><Gear /></Slot>
        </Sidebar>
      </Workspace>

      <Taskbar>
        <Weather>
          <WeatherIcon>
            <svg width="56" height="60" viewBox="0 0 56 60">
              <defs><PetalGrad id="moon" a="#f6b52f" b="#ee7a1b" x2={0} /></defs>
              <path d="M46 26a21 21 0 1 1-40 14 22 22 0 0 0 30-18z" fill="url(#moon)" />
              <path d="M9 29a8 8 0 0 1 0-15 9 9 0 0 1 18-1q7 0 8 8 0 8-6 8z" fill="#a9c7f5" />
              <path d="M9 29a6 6 0 0 1 0-10h24v9q-2 1-4 1z" fill="#c6dcf8" />
            </svg>
            <Badge $x={24} $y={0} $bg="#ff9aa8">1</Badge>
          </WeatherIcon>
          <TwoLines $pt={3}><Line $ls={-0.5}>17°C</Line><Line $dim $ls={-0.4}>Mostly clear</Line></TwoLines>
        </Weather>
        <TaskItem $top={24}><WinLogo /></TaskItem>
        <SearchBox>
          <Ico s={32} w={3.200} c="#e4dae8"><circle cx="13" cy="13" r="11" /><path d="M21 21l9 9" /></Ico>
          <span>Search</span>
          <City />
        </SearchBox>
        <TaskItem $top={24}><TaskView /></TaskItem>
        <TaskItem $top={23}><MeetIcon /></TaskItem>
        <TaskItem $open><FaWhatsapp size={52} color="#25d366" /><Badge $x={44} $y={12} $w={37} $bg="#dda0e4">17</Badge></TaskItem>
        <TaskItem $active><EdgeIcon /><Badge $x={20} $y={46} $w={24} $h={24} $bg="#fff"><Figures s={24} /></Badge></TaskItem>
        <TaskItem $open $top={26}><FolderIcon /></TaskItem>
        <TaskItem><StoreIcon /></TaskItem>
        <TaskItem $open><ChromeIcon /><Badge $x={46} $y={12} $h={34} $bg="#999"><Person /></Badge></TaskItem>
        <TaskItem $open><CodeIcon /></TaskItem>
        <TaskItem $open><ChromeIcon /><Badge $x={46} $y={12} $h={33} $bg="#2c5f1c" $fg="#dfe8dc" $weight={600} $size={18}>R</Badge></TaskItem>
        <Tray>
          <TrayIcon><Ico s={20} vb="0 0 20 20" c="#fff"><path d="M2 13l8-8 8 8" /></Ico></TrayIcon>
          <Slot $w={28} />
          <TwoLines $align="right" $pt={7}><span>ENG</span><span>IN</span></TwoLines>
          <Slot $w={29} />
          <TrayIcon><Ico c="#fff" w={2.200}><path d="M1 13a21 21 0 0 1 30 0" opacity=".3" /><path d="M5 17a15.500 15.500 0 0 1 22 0M9 21.500a10 10 0 0 1 14 0" /><circle cx="16" cy="25.500" r="2.500" fill="#fff" stroke="none" /></Ico></TrayIcon>
          <TrayIcon><Ico c="#fff" w={2.200}><path d="M1 12h5l8-7v22l-8-7H1zM18 11q3 5 0 10M22 8q6 8 0 16M26 4q9 12 0 24" /></Ico></TrayIcon>
          <TrayIcon><Ico c="#fff" w={2.200}><path d="M12 7h12q3 0 3 3v12q0 3-3 3H4q-3 0-3-3v-7" /><path d="M10 11h13v10H5v-4z" fill="#fff" /><path d="M29 13v5h2v-5z" fill="#fff" /><path d="M6 1l-5 9h4l-1 6 6-9H7z" fill="#fff" stroke="none" /></Ico></TrayIcon>
          <Slot $w={22} />
          <TwoLines $align="right" $pt={5}><Line $ls={-0.6}>07:54 PM</Line><Line $ls={0}>19-12-2023</Line></TwoLines>
          <Slot $w={7} />
          <TrayIcon>
            <svg width="28" height="32" viewBox="0 0 28 32"><path d="M14 1c7 0 10 5 10 11v7l3 5q0 1-1 1H2q-1 0-1-1l3-5v-7C4 6 7 1 14 1zM9 27h10q-1 4-5 4t-5-4z" fill="#f3bdf3" /></svg>
          </TrayIcon>
        </Tray>
      </Taskbar>
    </Screen>
  );
}
